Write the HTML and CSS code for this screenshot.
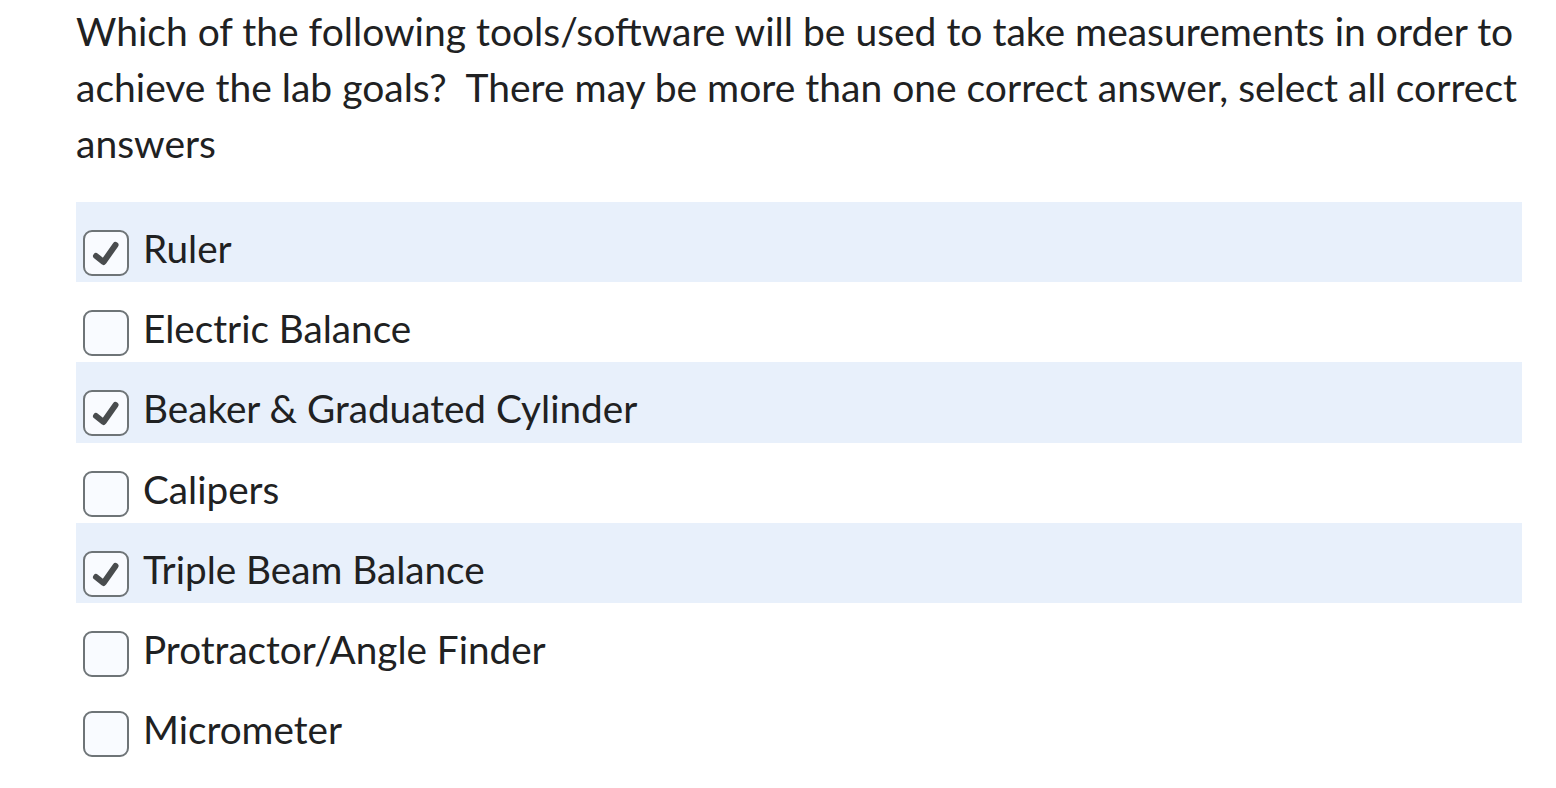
FILE: index.html
```html
<!DOCTYPE html>
<html lang="en">
<head>
    <meta charset="UTF-8">
    <title>Question</title>
    <link rel="stylesheet" href="styles.css">
</head>
<body>
    <div class="question">
        <div class="question-text">Which of the following tools/software will be used to take measurements in order to achieve the lab goals?&nbsp; There may be more than one correct answer, select all correct answers</div>
        <div class="choices">
            <label class="choice selected">
                <span class="box"><svg viewBox="0 0 46 46"><path d="M13 26 L20.5 32 L32.5 15"/></svg></span>
                <span class="choice-text">Ruler</span>
            </label>
            <label class="choice">
                <span class="box"></span>
                <span class="choice-text">Electric Balance</span>
            </label>
            <label class="choice selected">
                <span class="box"><svg viewBox="0 0 46 46"><path d="M13 26 L20.5 32 L32.5 15"/></svg></span>
                <span class="choice-text">Beaker &amp; Graduated Cylinder</span>
            </label>
            <label class="choice">
                <span class="box"></span>
                <span class="choice-text">Calipers</span>
            </label>
            <label class="choice selected">
                <span class="box"><svg viewBox="0 0 46 46"><path d="M13 26 L20.5 32 L32.5 15"/></svg></span>
                <span class="choice-text">Triple Beam Balance</span>
            </label>
            <label class="choice">
                <span class="box"></span>
                <span class="choice-text">Protractor/Angle Finder</span>
            </label>
            <label class="choice">
                <span class="box"></span>
                <span class="choice-text">Micrometer</span>
            </label>
        </div>
    </div>
</body>
</html>
```

FILE: styles.css
```css
body {
    margin: 0;
    padding: 0;
    background-color: white;
    font-family: Lato, "Open Sans", sans-serif;
    color: #202122;
}
.question {
    width: 1446px;
    margin-left: 76px;
    padding-top: 3px;
}
.question-text {
    font-size: 39px;
    line-height: 56px;
}
.choices {
    margin-top: 31px;
}
.choice {
    display: flex;
    align-items: flex-start;
    gap: 14px;
    height: 80.2px;
    box-sizing: border-box;
    padding: 28px 0 6px 7px;
}
.choice.selected {
    background-color: #e8f0fb;
}
.box {
    width: 46px;
    height: 46px;
    box-sizing: border-box;
    border: 2px solid #6e7477;
    border-radius: 9px;
    background-color: #f9fbff;
    flex-shrink: 0;
}
.box svg {
    display: block;
    width: 46px;
    height: 46px;
    margin: -2px;
}
.box path {
    fill: none;
    stroke: #494c4e;
    stroke-width: 6;
    stroke-linecap: round;
    stroke-linejoin: round;
}
.choice-text {
    font-size: 38.7px;
    line-height: 36px;
}
```
